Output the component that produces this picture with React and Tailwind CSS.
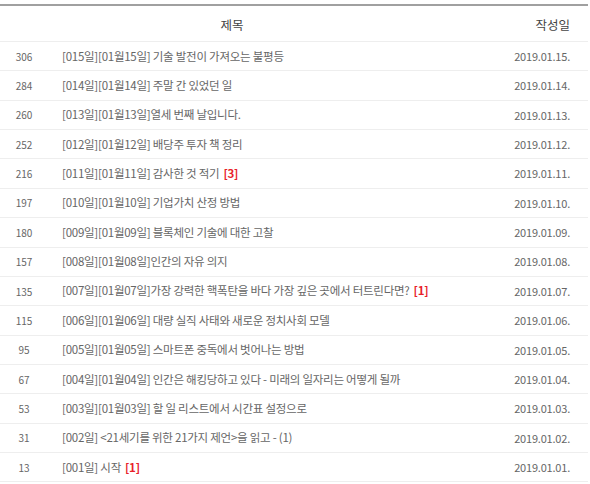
const rows = [
  ["306", "[015일][01월15일] 기술 발전이 가져오는 불평등", null, "2019.01.15."],
  ["284", "[014일][01월14일] 주말 간 있었던 일", null, "2019.01.14."],
  ["260", "[013일][01월13일]열세 번째 날입니다.", null, "2019.01.13."],
  ["252", "[012일][01월12일] 배당주 투자 책 정리", null, "2019.01.12."],
  ["216", "[011일][01월11일] 감사한 것 적기", "[3]", "2019.01.11."],
  ["197", "[010일][01월10일] 기업가치 산정 방법", null, "2019.01.10."],
  ["180", "[009일][01월09일] 블록체인 기술에 대한 고찰", null, "2019.01.09."],
  ["157", "[008일][01월08일]인간의 자유 의지", null, "2019.01.08."],
  ["135", "[007일][01월07일]가장 강력한 핵폭탄을 바다 가장 깊은 곳에서 터트린다면?", "[1]", "2019.01.07."],
  ["115", "[006일][01월06일] 대량 실직 사태와 새로운 정치사회 모델", null, "2019.01.06."],
  ["95", "[005일][01월05일] 스마트폰 중독에서 벗어나는 방법", null, "2019.01.05."],
  ["67", "[004일][01월04일] 인간은 해킹당하고 있다 - 미래의 일자리는 어떻게 될까", null, "2019.01.04."],
  ["53", "[003일][01월03일] 할 일 리스트에서 시간표 설정으로", null, "2019.01.03."],
  ["31", "[002일] <21세기를 위한 21가지 제언>을 읽고 - (1)", null, "2019.01.02."],
  ["13", "[001일] 시작", "[1]", "2019.01.01."],
];

export default function App() {
  return (
    <div className="w-[590px] h-[484px] bg-white overflow-hidden pt-[4px]" style={{ fontFamily: '"Noto Sans CJK KR", "Noto Sans", sans-serif' }}>
      <div className="w-[588px] border-t-2 border-[#a0a0a0]">
        <div className="flex h-[36px] pt-[4px] items-center border-b border-[#eeeeee] text-[12.5px] text-[#444]">
          <div className="w-[48px]" />
          <div className="w-[368px] text-center">제목</div>
          <div className="flex-1 text-right pr-[18px]">작성일</div>
        </div>
        {rows.map(([n, t, c, d]) => (
          <div key={n} className="flex h-[29.36px] items-center border-b border-[#eeeeee] text-[#666]">
            <div className="w-[48px] shrink-0 text-center text-[10px]">{n}</div>
            <div className="flex-1 pl-[14px] text-[11.5px] whitespace-nowrap tracking-[-0.25px]">
              {t}
              {c && <span className="ml-[4px] text-[#e8202a] font-semibold">{c}</span>}
            </div>
            <div className="w-[100px] shrink-0 text-right pr-[18px] text-[11px] tracking-[-0.2px]">{d}</div>
          </div>
        ))}
      </div>
    </div>
  );
}
